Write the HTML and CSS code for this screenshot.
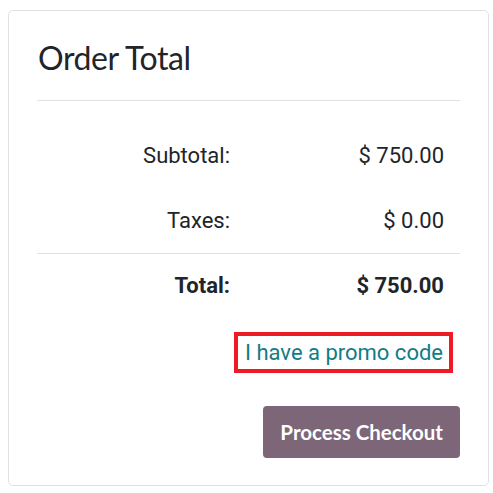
FILE: index.html
```html
<!DOCTYPE html>
<html lang="en">
<head>
<meta charset="utf-8">
<title>Order Total</title>
<link rel="stylesheet" href="styles.css">
</head>
<body>
<div class="card">
  <h2 class="card-title">Order Total</h2>
  <div class="totals">
    <div class="row">
      <div class="label">Subtotal:</div>
      <div class="value">$ 750.00</div>
    </div>
    <div class="row">
      <div class="label">Taxes:</div>
      <div class="value">$ 0.00</div>
    </div>
    <div class="row total">
      <div class="label">Total:</div>
      <div class="value">$ 750.00</div>
    </div>
  </div>
  <div class="promo">
    <span class="highlight"><a href="#" class="promo-link">I have a promo code</a></span>
  </div>
  <div class="actions">
    <a href="#" class="btn">Process Checkout</a>
  </div>
</div>
</body>
</html>
```

FILE: styles.css
```css
html, body {
  margin: 0;
  padding: 0;
  background: #ffffff;
}
body {
  font-family: Roboto, "Liberation Sans", sans-serif;
  color: #212529;
}
.card {
  margin: 10px 4px 0 8px;
  height: 474px;
  border: 1px solid #dee2e6;
  border-radius: 5px;
  padding: 0 28px;
  box-sizing: content-box;
}
.card-title {
  margin: 0;
  padding: 28px 0 23px 1px;
  font-family: Lato, "Noto Sans", sans-serif;
  font-weight: 400;
  font-size: 32px;
  letter-spacing: -0.4px;
  line-height: 38px;
  color: #212529;
  border-bottom: 1px solid #dee2e6;
}
.totals {
  margin-top: 22px;
}
.row {
  display: grid;
  grid-template-columns: 193px 1fr;
  font-size: 22px;
  line-height: 30px;
  padding: 17.5px 0;
}
.row.total {
  border-top: 1px solid #dee2e6;
  font-weight: 700;
  padding: 16.5px 0 18px;
}
.label {
  text-align: right;
}
.value {
  text-align: right;
  padding-right: 16px;
}
.promo {
  display: flex;
  justify-content: flex-end;
  padding-right: 7px;
  margin-top: 13px;
}
.highlight {
  display: inline-block;
  border: 4px solid #ed1c24;
  padding: 3px 6px 3px 7px;
}
.promo-link {
  font-size: 22px;
  line-height: 27px;
  color: #107d86;
  text-decoration: none;
}
.actions {
  display: flex;
  justify-content: flex-end;
  margin-top: 33px;
}
.btn {
  display: inline-block;
  background: #7d6677;
  color: #ffffff;
  font-family: Lato, "Noto Sans", sans-serif;
  font-weight: 700;
  font-size: 20.5px;
  line-height: 30px;
  padding: 11px 17px;
  border-radius: 4px;
  text-decoration: none;
}
```
